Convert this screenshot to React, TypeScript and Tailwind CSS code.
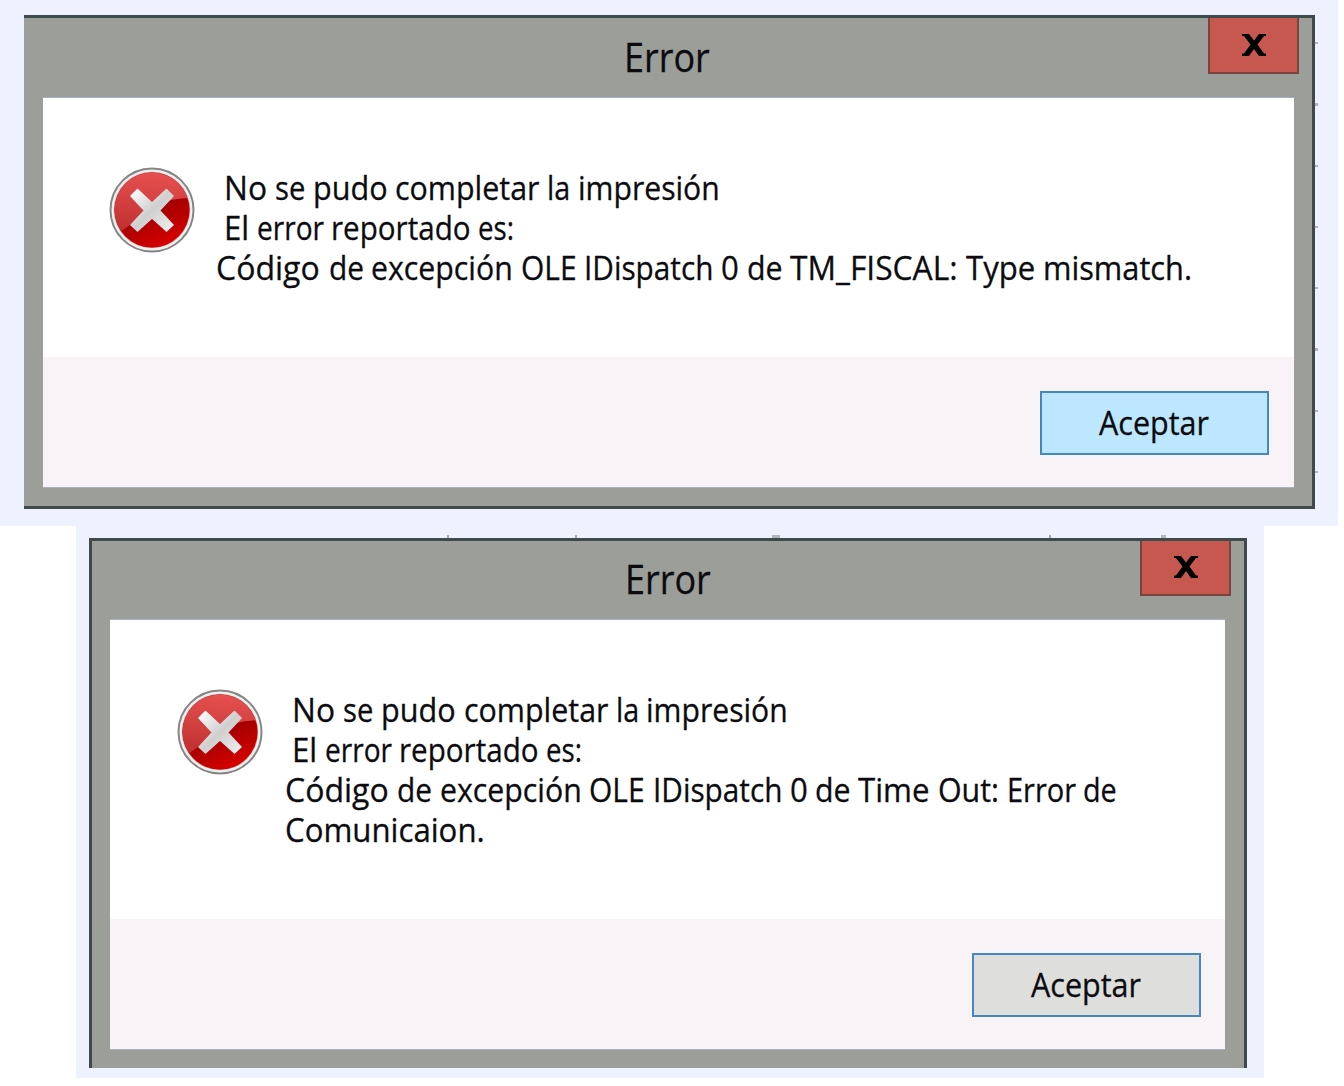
import { useId, useLayoutEffect, useRef, type ReactNode } from 'react';

type Word = [text: string, width: number];

/** A word squeezed horizontally to its column width, for a condensed UI face. */
function FitWord({ text, width }: { text: string; width: number }) {
  const ref = useRef<HTMLSpanElement>(null);
  useLayoutEffect(() => {
    const el = ref.current;
    if (el) el.style.transform = `scaleX(${width / el.offsetWidth})`;
  }, [width, text]);
  return (
    <span className="block shrink-0" style={{ width }}>
      <span ref={ref} className="inline-block origin-left whitespace-pre">
        {text}
      </span>
    </span>
  );
}

function Line({ words }: { words: Word[] }) {
  return (
    <p className="flex h-10 text-[33px] leading-10">
      {words.map(([text, width], i) => (
        <FitWord key={i} text={text} width={width} />
      ))}
    </p>
  );
}

function ErrorIcon() {
  const id = useId();
  return (
    <svg viewBox="0 0 88 88" className="block size-[88px] shrink-0">
      <defs>
        <linearGradient id={`${id}a`} x1="0.3" y1="0" x2="0.75" y2="1">
          <stop offset="0" stopColor="#b80000" />
          <stop offset="0.5" stopColor="#a40000" />
          <stop offset="0.8" stopColor="#c40000" />
          <stop offset="1" stopColor="#e00000" />
        </linearGradient>
        <linearGradient id={`${id}b`} x1="0.5" y1="0" x2="0.4" y2="1">
          <stop offset="0" stopColor="#ea5452" />
          <stop offset="1" stopColor="#c03030" />
        </linearGradient>
        <linearGradient id={`${id}c`} x1="0" y1="0" x2="1" y2="1">
          <stop offset="0" stopColor="#ffffff" />
          <stop offset="0.5" stopColor="#cfcfcf" />
          <stop offset="1" stopColor="#f0f0f0" />
        </linearGradient>
        <clipPath id={`${id}d`}>
          <circle cx="44" cy="44" r="37.5" />
        </clipPath>
      </defs>
      <circle cx="44" cy="44" r="41.5" fill="#f1f1f1" stroke="#868686" strokeWidth="2" />
      <circle cx="44" cy="44" r="38.2" fill="#c98f8f" />
      <circle cx="44" cy="44" r="37.5" fill={`url(#${id}a)`} />
      <path
        d="M0 0H88V32C68 32 54 35 42 43C30 51 22 60 12 66H0Z"
        fill={`url(#${id}b)`}
        clipPath={`url(#${id}d)`}
      />
      <path
        d="M29.500 23.500L44 37L58.500 23.500L65 30L51.500 44.500L65 59L58.500 65L44 52L29.500 65L23 59L36.500 44.500L23 30Z"
        fill={`url(#${id}c)`}
        stroke={`url(#${id}c)`}
        strokeWidth="1.500"
        strokeLinejoin="round"
      />
    </svg>
  );
}

function CloseButton({ className }: { className: string }) {
  return (
    <button
      aria-label="Cerrar"
      className={`mr-[13px] flex w-[91px] items-start justify-center border-2 border-t-0 border-[#7a443e] bg-[#c75850] ${className}`}
    >
      <svg viewBox="0 0 24 22" className="block h-[22px] w-6">
        <path d="M0 0H7L12 6.500L17 0H24V2H22L15.500 10.500L22 19.500H24V22H17L12 15L7 22H0V19.500H2L8.500 10.500L2 2H0Z" />
      </svg>
    </button>
  );
}

function Dialog({
  frame,
  close,
  body,
  message,
  title,
  lines,
  buttonTone,
}: {
  frame: string;
  close: string;
  body: string;
  message: string;
  title: string;
  lines: ReactNode;
  buttonTone: string;
}) {
  return (
    <section className={`flex flex-col border-[#3f4a4a] bg-[#9c9e9a] ${frame}`}>
      <header className="flex shrink-0 items-start justify-between">
        <h1 className={`flex text-[41px] leading-[60px] ${title}`}>
          <FitWord text="Error" width={86} />
        </h1>
        <CloseButton className={close} />
      </header>
      <div className={`flex flex-col border-y border-[#a9b0c0] bg-white ${body}`}>
        <div className={`flex ${message}`}>
          <ErrorIcon />
          <div className="pt-0.5">{lines}</div>
        </div>
        <footer className="flex flex-1 items-start justify-end bg-[#f7f3f7] pt-[34px]">
          <button
            className={`flex h-16 border-2 border-[#4488c2] pl-[56.5px] pt-2.5 text-[33px] leading-10 ${buttonTone}`}
          >
            <FitWord text="Aceptar" width={110} />
          </button>
        </footer>
      </div>
    </section>
  );
}

const intro: Word[] = [
  ['No ', 51],
  ['se ', 38],
  ['pudo ', 82.5],
  ['completar ', 152],
  ['la ', 30.5],
  ['impresión', 141.5],
];
const reported: Word[] = [
  ['El ', 33],
  ['error ', 74],
  ['reportado ', 147],
  ['es:', 36],
];
const exception: Word[] = [
  ['Código ', 112.5],
  ['de ', 42.5],
  ['excepción ', 149.5],
  ['OLE ', 63.5],
  ['IDispatch ', 137],
  ['0 ', 25.5],
  ['de ', 43.2],
];

function Message({ detail, rest }: { detail: Word[]; rest?: Word[] }) {
  return (
    <>
      <div className="pl-[7.5px]">
        <Line words={intro} />
        <Line words={reported} />
      </div>
      <Line words={[...exception, ...detail]} />
      {rest && <Line words={rest} />}
    </>
  );
}

export default function App() {
  return (
    <main className="h-[1086px] w-[1344px] overflow-hidden bg-white font-['Open_Sans',sans-serif] text-[#0c0c10] [-webkit-text-stroke:0.3px_#0c0c10]">
      <div className="flex h-[526px] w-[1338px] bg-[#eef2ff] pl-6 pt-[15px]">
        <Dialog
          frame="h-[494px] w-[1291px] border-y-[3px] border-r-[3px]"
          close="h-14 pt-4"
          title="h-[79px] pl-[599.5px] pt-2"
          body="ml-[19px] w-[1251px] h-[391px]"
          message="h-[259px] pl-[65px] pt-[68px] gap-[20px]"
          lines={
            <Message
              detail={[
                ['TM_FISCAL: ', 176],
                ['Type ', 77.3],
                ['mismatch.', 149],
              ]}
            />
          }
          buttonTone="mr-[25px] w-[229px] bg-[#bde6ff]"
        />
        <div className="flex w-1 flex-col gap-[59px] pt-[27px]">
          {[0, 1, 2, 3, 4, 5, 6, 7].map((n) => (
            <i key={n} className="block h-[2.3px] w-[3px] shrink-0 bg-[#b3b5bb]" />
          ))}
        </div>
      </div>
      <div className="ml-[76px] flex h-[552px] w-[1188px] flex-col bg-[#eef2ff] pl-[13px]">
        <div className="flex h-3 items-end">
          <i className="ml-[358px] block h-[3px] w-0.5 bg-[#a4a6aa]" />
          <i className="ml-[126px] block h-[3px] w-0.5 bg-[#a4a6aa]" />
          <i className="ml-[195px] block h-[3px] w-2 bg-[#b4b6ba]" />
          <i className="ml-[269px] block h-[3px] w-0.5 bg-[#a4a6aa]" />
          <i className="ml-[110px] block h-[3px] w-[5px] bg-[#b4b6ba]" />
        </div>
        <Dialog
          frame="h-[530px] w-[1158px] border-x-[3px] border-t-[3px]"
          close="h-[55px] pt-[15px]"
          title="h-[78px] pl-[533px] pt-[7px]"
          body="ml-[18px] w-[1115px] h-[431px]"
          message="h-[299px] pl-[66px] pt-[68px] gap-[20.5px]"
          lines={
            <Message
              detail={[
                ['Time ', 79.5],
                ['Out: ', 69],
                ['Error ', 76.5],
                ['de', 34],
              ]}
              rest={[['Comunicaion.', 199.5]]}
            />
          }
          buttonTone="mr-6 w-[229px] bg-[#dededd]"
        />
      </div>
    </main>
  );
}
